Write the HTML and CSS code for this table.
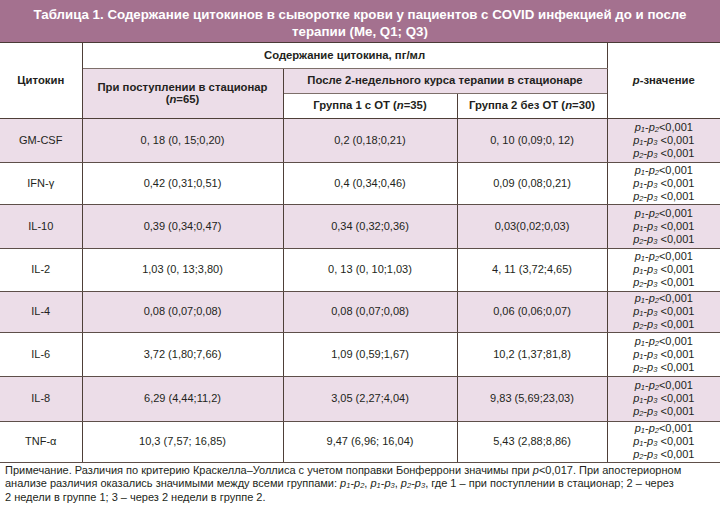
FILE: index.html
```html
<!DOCTYPE html>
<html lang="ru">
<head>
<meta charset="utf-8">
<title>Таблица 1</title>
<link rel="stylesheet" href="styles.css">
</head>
<body>
<div class="page">
  <div class="title">Таблица 1. Содержание цитокинов в сыворотке крови у пациентов с COVID инфекцией до и после терапии (Me, Q1; Q3)</div>
  <table class="data">
    <colgroup>
      <col class="c1"><col class="c2"><col class="c3"><col class="c4"><col class="c5">
    </colgroup>
    <thead>
      <tr class="hr">
        <th rowspan="3" class="white">Цитокин</th>
        <th colspan="3" class="white">Содержание цитокина, пг/мл</th>
        <th rowspan="3" class="white"><i>p</i>-значение</th>
      </tr>
      <tr class="hr">
        <th rowspan="2" class="pink">При поступлении в стационар<br>(<i>n</i>=65)</th>
        <th colspan="2" class="pink">После 2-недельного курса терапии в стационаре</th>
      </tr>
      <tr class="hr">
        <th class="white">Группа 1 с ОТ (<i>n</i>=35)</th>
        <th class="white">Группа 2 без ОТ (<i>n</i>=30)</th>
      </tr>
    </thead>
    <tbody>
      <tr class="pink h44"><td>GM-CSF</td><td>0, 18 (0, 15;0,20)</td><td>0,2 (0,18;0,21)</td><td>0, 10 (0,09;0, 12)</td><td class="pv"><span><i>p</i><sub>1</sub>-<i>p</i><sub>2</sub>&lt;0,001</span><span><i>p</i><sub>1</sub>-<i>p</i><sub>3</sub> &lt;0,001</span><span><i>p</i><sub>2</sub>-<i>p</i><sub>3</sub> &lt;0,001</span></td></tr>
      <tr class="white h42"><td>IFN-γ</td><td>0,42 (0,31;0,51)</td><td>0,4 (0,34;0,46)</td><td>0,09 (0,08;0,21)</td><td class="pv"><span><i>p</i><sub>1</sub>-<i>p</i><sub>2</sub>&lt;0,001</span><span><i>p</i><sub>1</sub>-<i>p</i><sub>3</sub> &lt;0,001</span><span><i>p</i><sub>2</sub>-<i>p</i><sub>3</sub> &lt;0,001</span></td></tr>
      <tr class="pink h44"><td>IL-10</td><td>0,39 (0,34;0,47)</td><td>0,34 (0,32;0,36)</td><td>0,03(0,02;0,03)</td><td class="pv"><span><i>p</i><sub>1</sub>-<i>p</i><sub>2</sub>&lt;0,001</span><span><i>p</i><sub>1</sub>-<i>p</i><sub>3</sub> &lt;0,001</span><span><i>p</i><sub>2</sub>-<i>p</i><sub>3</sub> &lt;0,001</span></td></tr>
      <tr class="white h43"><td>IL-2</td><td>1,03 (0, 13;3,80)</td><td>0, 13 (0, 10;1,03)</td><td>4, 11 (3,72;4,65)</td><td class="pv"><span><i>p</i><sub>1</sub>-<i>p</i><sub>2</sub>&lt;0,001</span><span><i>p</i><sub>1</sub>-<i>p</i><sub>3</sub> &lt;0,001</span><span><i>p</i><sub>2</sub>-<i>p</i><sub>3</sub> &lt;0,001</span></td></tr>
      <tr class="pink h41"><td>IL-4</td><td>0,08 (0,07;0,08)</td><td>0,08 (0,07;0,08)</td><td>0,06 (0,06;0,07)</td><td class="pv"><span><i>p</i><sub>1</sub>-<i>p</i><sub>2</sub>&lt;0,001</span><span><i>p</i><sub>1</sub>-<i>p</i><sub>3</sub> &lt;0,001</span><span><i>p</i><sub>2</sub>-<i>p</i><sub>3</sub> &lt;0,001</span></td></tr>
      <tr class="white h44"><td>IL-6</td><td>3,72 (1,80;7,66)</td><td>1,09 (0,59;1,67)</td><td>10,2 (1,37;81,8)</td><td class="pv"><span><i>p</i><sub>1</sub>-<i>p</i><sub>2</sub>&lt;0,001</span><span><i>p</i><sub>1</sub>-<i>p</i><sub>3</sub> &lt;0,001</span><span><i>p</i><sub>2</sub>-<i>p</i><sub>3</sub> &lt;0,001</span></td></tr>
      <tr class="pink h45"><td>IL-8</td><td>6,29 (4,44;11,2)</td><td>3,05 (2,27;4,04)</td><td>9,83 (5,69;23,03)</td><td class="pv"><span><i>p</i><sub>1</sub>-<i>p</i><sub>2</sub>&lt;0,001</span><span><i>p</i><sub>1</sub>-<i>p</i><sub>3</sub> &lt;0,001</span><span><i>p</i><sub>2</sub>-<i>p</i><sub>3</sub> &lt;0,001</span></td></tr>
      <tr class="white h41"><td>TNF-α</td><td>10,3 (7,57; 16,85)</td><td>9,47 (6,96; 16,04)</td><td>5,43 (2,88;8,86)</td><td class="pv"><span><i>p</i><sub>1</sub>-<i>p</i><sub>2</sub>&lt;0,001</span><span><i>p</i><sub>1</sub>-<i>p</i><sub>3</sub> &lt;0,001</span><span><i>p</i><sub>2</sub>-<i>p</i><sub>3</sub> &lt;0,001</span></td></tr>
    </tbody>
  </table>
  <p class="note">Примечание. Различия по критерию Краскелла–Уоллиса с учетом поправки Бонферрони значимы при <i>p</i>&lt;0,017. При апостериорном<br>анализе различия оказались значимыми между всеми группами: <i>p</i><sub>1</sub>-<i>p</i><sub>2</sub>, <i>p</i><sub>1</sub>-<i>p</i><sub>3</sub>, <i>p</i><sub>2</sub>-<i>p</i><sub>3</sub>, где 1 – при поступлении в стационар; 2 – через<br>2 недели в группе 1; 3 – через 2 недели в группе 2.</p>
</div>
</body>
</html>
```

FILE: styles.css
```css
* { box-sizing: border-box; }
html, body { margin: 0; padding: 0; background: #ffffff; }
body {
  font-family: "Liberation Sans", Arial, sans-serif;
  color: #231f20;
}
.page { width: 720px; }

.title {
  background: #a4718f;
  color: #ffffff;
  font-weight: bold;
  font-size: 13.3px;
  line-height: 17px;
  text-align: center;
  padding: 6px 26px 0;
  height: 43px;
  border-bottom: 1px solid #4a3b36;
}

.data {
  width: 720px;
  border-collapse: collapse;
  table-layout: fixed;
  font-size: 11px;
}
.c1 { width: 82px; }
.c2 { width: 201px; }
.c3 { width: 174px; }
.c4 { width: 150px; }
.c5 { width: 113px; }

.data th, .data td {
  text-align: center;
  vertical-align: middle;
  padding: 0 4px;
  border-left: 1px solid #4e3f38;
  border-right: 1px solid #4e3f38;
  border-top: 1px solid #7d6f6a;
  border-bottom: 1px solid #7d6f6a;
  line-height: 13px;
}
.data tr > :first-child { border-left: none; }
.data tr > :last-child { border-right: none; }
.data thead tr:first-child th { border-top: none; }
.data th { font-weight: bold; font-size: 11.3px; line-height: 12.5px; }
.hr { height: 25px; }
.data thead tr:last-child th,
.data thead th[rowspan="3"],
.data thead th[rowspan="2"] { border-bottom: 1px solid #4e3f38; }
.data tbody td { border-top: 1px solid #5e4f49; border-bottom: 1px solid #5e4f49; }

.pink, .pink > td, th.pink { background: #ecdde8; }
.white, .white > td, th.white { background: #ffffff; }

.h41 { height: 41px; }
.h42 { height: 42px; }
.h43 { height: 43px; }
.h44 { height: 44px; }
.h45 { height: 45px; }

.pv span { display: block; line-height: 13px; }
sub {
  font-size: 7.5px;
  vertical-align: -1px;
  line-height: 0;
  font-style: italic;
}

.note {
  margin: 0;
  padding: 1px 4px 0 5px;
  font-size: 11px;
  line-height: 13.5px;
  white-space: nowrap;
}
```
